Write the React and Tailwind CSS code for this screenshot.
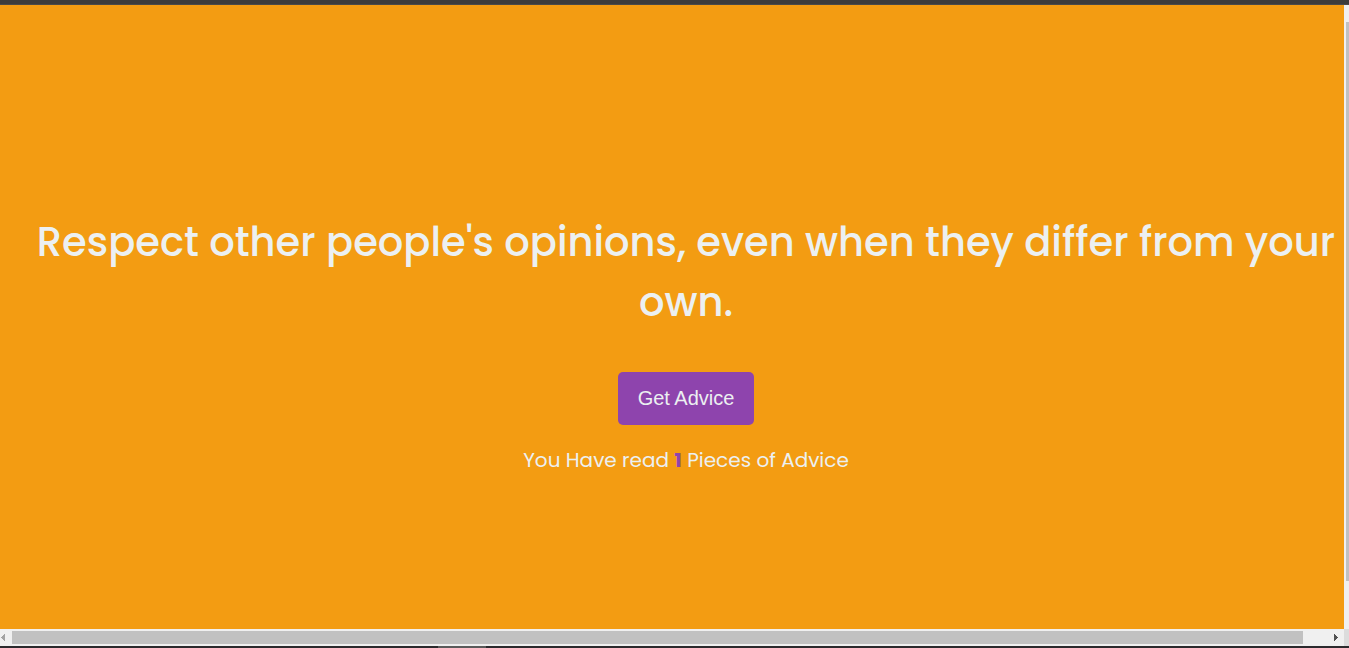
import { useState } from "react";

const ADVICE = [
  "Respect other people's opinions, even when they differ from your own.",
];

function VerticalScrollbar() {
  return (
    <div aria-hidden="true" className="flex w-[5px] shrink-0 flex-col bg-[#f0f0f0] pt-[17px] pb-12 pl-0.5">
      <div className="flex-1 bg-[#c1c1c1]" />
    </div>
  );
}

function HorizontalScrollbar() {
  return (
    <div aria-hidden="true" className="flex h-[17px] shrink-0 bg-[#f0f0f0]">
      <div className="flex w-3 items-center pl-px">
        <svg width="4" height="7" viewBox="0 0 4 7" fill="#a3a3a3" shapeRendering="crispEdges">
          <path d="M4 0v7H3V6H2V5H1V4H0V3h1V2h1V1h1V0z" />
        </svg>
      </div>
      <div className="my-0.5 flex-1 bg-[#c1c1c1]" />
      <div className="flex w-[41px] items-center justify-end pr-1.5">
        <svg width="4" height="7" viewBox="0 0 4 7" fill="#505050" shapeRendering="crispEdges">
          <path d="M0 0v7h1V6h1V5h1V4h1V3H3V2H2V1H1V0z" />
        </svg>
      </div>
      <div className="w-[5px] bg-[#dcdcdc]" />
    </div>
  );
}

export default function App() {
  const [count, setCount] = useState(1);
  const advice = ADVICE[(count - 1) % ADVICE.length];

  return (
    <div className="flex h-screen flex-col bg-[#f39c12]">
      <div className="h-[5px] shrink-0 border-b border-[#4a4a4a] bg-[#3c3c3c]" />
      <div className="flex min-h-0 flex-1">
        <main className="flex flex-1 flex-col items-center justify-center pt-[52px] pl-7 text-center font-['Poppins','Inter',sans-serif] text-[#ecf0f1]">
          <h1 className="mb-10 text-[40px] leading-[60px] font-medium">{advice}</h1>
          <button
            type="button"
            onClick={() => setCount(count + 1)}
            className="mb-5 h-[53px] cursor-pointer rounded-[5px] bg-[#8e44ad] px-5 font-['Liberation_Sans',Arial,sans-serif] text-[20px]"
          >
            Get Advice
          </button>
          <p className="text-[20px] leading-[30px]">
            You Have read <b className="font-bold text-[#8e44ad]">{count}</b> Pieces of Advice
          </p>
        </main>
        <VerticalScrollbar />
      </div>
      <HorizontalScrollbar />
      <div className="flex h-0.5 shrink-0 bg-[#2b2a2d]">
        <div className="ml-[438px] w-12 bg-[#5a5a5a]" />
      </div>
    </div>
  );
}
